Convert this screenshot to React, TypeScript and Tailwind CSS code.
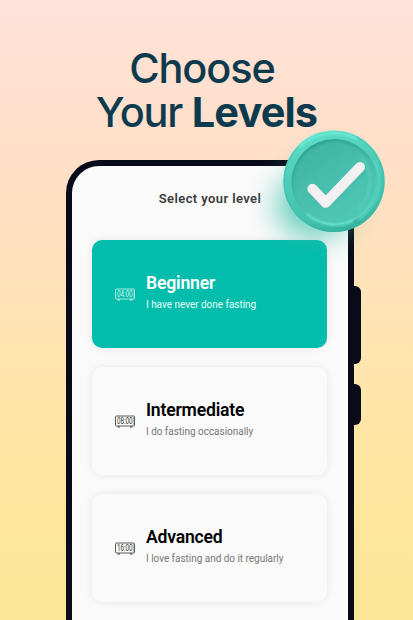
type Level = { title: string; note: string; time: string; active?: boolean };

const levels: Level[] = [
  { title: "Beginner", note: "I have never done fasting", time: "04:00", active: true },
  { title: "Intermediate", note: "I do fasting occasionally", time: "08:00" },
  { title: "Advanced", note: "I love fasting and do it regularly", time: "16:00" },
];

function ClockIcon({ time }: { time: string }) {
  return (
    <svg width="20" height="16" viewBox="0 -1.5 20 16" className="shrink-0 overflow-visible" fill="none">
      <rect x="0.5" y="0.5" width="19" height="10" rx="1" stroke="currentColor" strokeWidth="0.8" />
      <path d="M18.4 1.5v8" stroke="currentColor" strokeWidth="0.6" opacity="0.6" />
      <path d="M2.5 11.5h2.4M15 11.5h2.4" stroke="currentColor" strokeWidth="1.2" />
      <text
        x="2"
        y="8.9"
        fontSize="9.6"
        textLength="15.6"
        lengthAdjust="spacingAndGlyphs"
        fill="currentColor"
        className="font-['Roboto',sans-serif]"
      >
        {time}
      </text>
    </svg>
  );
}

function LevelCard({ title, note, time, active }: Level) {
  return (
    <div
      className={
        active
          ? "flex h-[108px] items-center gap-[11px] rounded-[10px] bg-[#02bdab] pl-[23px] text-white shadow-[0_0_9px_rgba(0,0,0,0.08)]"
          : "flex h-[108px] items-center gap-[11px] rounded-[10px] bg-[#fafafa] pl-[23px] text-black shadow-[0_0_9px_rgba(0,0,0,0.08)]"
      }
    >
      <div className={active ? "pt-[2px] text-[#d5f8f2]" : "pt-[2px] text-[#333]"}>
        <ClockIcon time={time} />
      </div>
      <div className="pb-px">
        <div className="-mt-px text-[17.6px] leading-[22px] font-semibold tracking-[-0.2px] whitespace-nowrap">{title}</div>
        <div
          className={
            active
              ? "text-[10px] leading-[21px] tracking-[-0.03px] whitespace-nowrap text-[#e8fffb]"
              : "text-[10px] leading-[21px] tracking-[-0.03px] whitespace-nowrap text-[#777]"
          }
        >
          {note}
        </div>
      </div>
    </div>
  );
}

function CheckBadge() {
  return (
    <svg width="104" height="104" viewBox="282 129 104 104" className="absolute top-[129px] left-[282px]" fill="none">
      <defs>
        <linearGradient id="rim" x1="0.3" y1="0" x2="0.6" y2="1">
          <stop offset="0" stopColor="#5de0ca" />
          <stop offset="0.35" stopColor="#4fcdb9" />
          <stop offset="0.8" stopColor="#42c2ae" />
          <stop offset="1" stopColor="#36b19d" />
        </linearGradient>
        <linearGradient id="groove" x1="0.25" y1="0" x2="0.75" y2="1">
          <stop offset="0" stopColor="#2b9f8e" />
          <stop offset="0.5" stopColor="#42bba8" />
          <stop offset="1" stopColor="#5fdfca" />
        </linearGradient>
        <linearGradient id="face" x1="0.2" y1="0" x2="0.8" y2="1">
          <stop offset="0" stopColor="#3fb3a2" />
          <stop offset="0.5" stopColor="#48bfad" />
          <stop offset="1" stopColor="#4fc9b6" />
        </linearGradient>
        <filter id="soft" x="-10%" y="-10%" width="120%" height="120%">
          <feGaussianBlur stdDeviation="1.1" />
        </filter>
      </defs>
      <circle cx="334" cy="181.3" r="50.8" fill="url(#rim)" />
      <circle cx="334" cy="181.5" r="49.8" stroke="#36b7a3" strokeWidth="1" opacity="0.45" />
      <path d="M299 147a48 48 0 0 1 58-8" stroke="#74ecd8" strokeWidth="2.5" filter="url(#soft)" />
      <path d="M374 160a46 46 0 0 1-15 59" stroke="#62dcc8" strokeWidth="1.6" filter="url(#soft)" />
      <circle cx="334.5" cy="182" r="43" fill="url(#groove)" />
      <circle cx="334.5" cy="182.8" r="41" fill="url(#face)" filter="url(#soft)" />
      <path d="M361 157a38 38 0 0 1-4 53" stroke="#5cd6c2" strokeWidth="2.5" opacity="0.55" filter="url(#soft)" />
      <path d="M307 214a42 42 0 0 0 46 7" stroke="#74efdb" strokeWidth="1.4" filter="url(#soft)" />
      <path d="M313 189.8l13 13.6 34.5-35.2" stroke="#2b9c8b" strokeWidth="10" strokeLinecap="round" strokeLinejoin="round" opacity="0.4" filter="url(#soft)" />
      <path d="M312.5 189l13.2 13.8 34.3-35.6" stroke="#dcdedf" strokeWidth="10.4" strokeLinecap="round" strokeLinejoin="round" />
      <path d="M312.5 188.6l13.2 13.8 34.1-35.4" stroke="#f1f1f2" strokeWidth="9.4" strokeLinecap="round" strokeLinejoin="round" />
    </svg>
  );
}

export default function App() {
  return (
    <div className="relative flex h-[620px] w-[413px] flex-col overflow-hidden bg-[linear-gradient(to_bottom,#ffe2d9_0%,#ffdfc6_28%,#ffe4b3_52%,#ffe79f_78%,#fae696_100%)] pt-[47px] font-['Roboto',sans-serif]">
      <h1 className="h-[113px] shrink-0 text-center font-['Inter',sans-serif] text-[41.5px] leading-[43.5px] font-[450] tracking-[-1.1px] text-[#0e3a4d]">
        <div className="-ml-[9px]">Choose</div>
        <div className="tracking-[-1.3px]">
          Your <span className="font-[650] tracking-[-0.9px]">Levels</span>
        </div>
      </h1>

      <div className="flex items-start pl-[66px]">
        <div className="h-[500px] w-[288px] shrink-0 rounded-t-[33px] border-6 border-b-0 border-[#090b18] bg-[#fafafa] pr-[21px] pl-5">
          <div className="flex h-[74px] items-center justify-center pt-[2px] pb-[10px] pl-px text-[13px] font-semibold tracking-[0.4px] text-[#3c3c3c]">
            Select your level
          </div>
          <div className="flex flex-col gap-[19px]">
            {levels.map((level) => (
              <LevelCard key={level.title} {...level} />
            ))}
          </div>
        </div>
        <div className="flex flex-col gap-5 pt-[126px]">
          <div className="h-[78px] w-[6.5px] rounded-r-[6px] bg-[#090b18]" />
          <div className="h-[41px] w-[6.5px] rounded-r-[6px] bg-[#090b18]" />
        </div>
      </div>

      <div className="absolute top-[172px] left-[276px] h-[66px] w-[76px] rounded-full bg-[#36bfa8]/70 blur-[14px]" />
      <CheckBadge />
    </div>
  );
}
